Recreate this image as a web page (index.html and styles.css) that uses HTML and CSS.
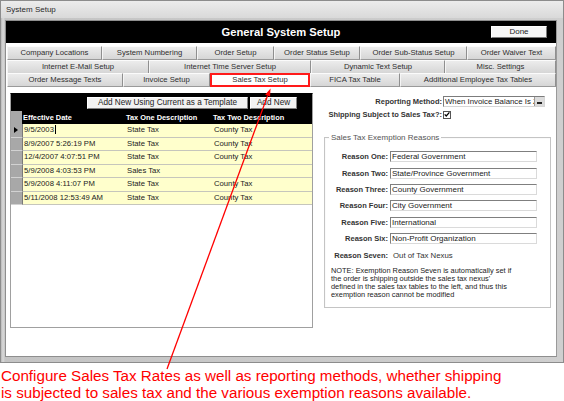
FILE: index.html
```html
<!DOCTYPE html>
<html>
<head>
<meta charset="utf-8">
<title>System Setup</title>
<link rel="stylesheet" href="styles.css">
</head>
<body>
<div class="window">
  <div class="titlebar">System Setup</div>
  <div class="client">
    <div class="header">
      <div class="header-title">General System Setup</div>
      <div class="header-actions"><button class="done">Done</button></div>
    </div>
    <div class="tabs">
      <div class="tabrow r1">
        <div class="tab">Company Locations</div>
        <div class="tab">System Numbering</div>
        <div class="tab">Order Setup</div>
        <div class="tab">Order Status Setup</div>
        <div class="tab">Order Sub-Status Setup</div>
        <div class="tab">Order Waiver Text</div>
      </div>
      <div class="tabrow r2">
        <div class="tab">Internet E-Mail Setup</div>
        <div class="tab">Internet Time Server Setup</div>
        <div class="tab">Dynamic Text Setup</div>
        <div class="tab">Misc. Settings</div>
      </div>
      <div class="tabrow r3">
        <div class="tab">Order Message Texts</div>
        <div class="tab">Invoice Setup</div>
        <div class="tab active">Sales Tax Setup</div>
        <div class="tab">FICA Tax Table</div>
        <div class="tab">Additional Employee Tax Tables</div>
      </div>
    </div>
    <div class="page">
      <div class="grid">
        <div class="grid-head">
          <div class="grid-buttons">
            <button class="btn btn-template">Add New Using Current as a Template</button>
            <button class="btn btn-new">Add New</button>
          </div>
          <div class="row head-row">
            <div class="sel sel-head"></div>
            <div class="cell">Effective Date</div>
            <div class="cell">Tax One Description</div>
            <div class="cell">Tax Two Description</div>
          </div>
        </div>
        <div class="row data-row">
          <div class="sel"><span class="current"></span></div>
          <div class="cell">9/5/2003<span class="caret"></span></div>
          <div class="cell">State Tax</div>
          <div class="cell">County Tax</div>
        </div>
        <div class="row data-row">
          <div class="sel"></div>
          <div class="cell">8/9/2007 5:26:19 PM</div>
          <div class="cell">State Tax</div>
          <div class="cell">County Tax</div>
        </div>
        <div class="row data-row">
          <div class="sel"></div>
          <div class="cell">12/4/2007 4:07:51 PM</div>
          <div class="cell">State Tax</div>
          <div class="cell">County Tax</div>
        </div>
        <div class="row data-row">
          <div class="sel"></div>
          <div class="cell">5/9/2008 4:03:53 PM</div>
          <div class="cell">Sales Tax</div>
          <div class="cell"></div>
        </div>
        <div class="row data-row">
          <div class="sel"></div>
          <div class="cell">5/9/2008 4:11:07 PM</div>
          <div class="cell">State Tax</div>
          <div class="cell">County Tax</div>
        </div>
        <div class="row data-row">
          <div class="sel"></div>
          <div class="cell">5/11/2008 12:53:49 AM</div>
          <div class="cell">State Tax</div>
          <div class="cell">County Tax</div>
        </div>
      </div>
      <div class="side">
        <div class="field-row">
          <label class="field-label">Reporting Method:</label>
          <div class="select"><span class="select-text">When Invoice Balance Is Zero</span><span class="select-btn"><span class="select-arrow"></span></span></div>
        </div>
        <div class="field-row">
          <label class="field-label">Shipping Subject to Sales Tax?:</label>
          <span class="checkbox"><svg width="7" height="7" viewBox="0 0 7 7"><path d="M0.8 3.4 L2.6 5.3 L6.3 1.0" fill="none" stroke="#000" stroke-width="1.5"/></svg></span>
        </div>
        <fieldset class="reasons">
          <legend>Sales Tax Exemption Reasons</legend>
          <div class="reason"><span class="reason-label">Reason One:</span><span class="input">Federal Government</span></div>
          <div class="reason"><span class="reason-label">Reason Two:</span><span class="input">State/Province Government</span></div>
          <div class="reason"><span class="reason-label">Reason Three:</span><span class="input">County Government</span></div>
          <div class="reason"><span class="reason-label">Reason Four:</span><span class="input">City Government</span></div>
          <div class="reason"><span class="reason-label">Reason Five:</span><span class="input">International</span></div>
          <div class="reason"><span class="reason-label">Reason Six:</span><span class="input">Non-Profit Organization</span></div>
          <div class="reason"><span class="reason-label">Reason Seven:</span><span class="reason-value">Out of Tax Nexus</span></div>
          <p class="note">NOTE: Exemption Reason Seven is automatically set if<br>the order is shipping outside the sales tax nexus'<br>defined in the sales tax tables to the left, and thus this<br>exemption reason cannot be modified</p>
        </fieldset>
      </div>
    </div>
  </div>
</div>
<p class="caption">Configure Sales Tax Rates as well as reporting methods, whether shipping<br>is subjected to sales tax and the various exemption reasons available.</p>
<svg class="arrow" width="564" height="401" viewBox="0 0 564 401">
  <line x1="167" y1="369" x2="267.6" y2="95.6" stroke="#ff0000" stroke-width="1.3"/>
  <polygon points="270.5,88.5 270.1,96.6 265.2,94.8" fill="#ff0000"/>
</svg>
</body>
</html>
```
FILE: styles.css
```css
* { box-sizing: border-box; }
html, body { margin: 0; padding: 0; background: #ffffff; }
body {
  position: relative;
  width: 564px;
  height: 401px;
  overflow: hidden;
  font-family: "Liberation Sans", Arial, sans-serif;
  color: #222;
}
.window {
  width: 564px;
  height: 363px;
  background: linear-gradient(to right, #b9b9b9 0, #dadada 2px, #c4c4c4 4px, #cfcfcf 100%);
  border: 1px solid #8c8c8c;
  padding: 0 6px 5px 4px;
  display: flex;
  flex-direction: column;
}
.titlebar {
  height: 17px;
  margin: 0 -6px 0 -4px;
  padding-left: 5px;
  font-size: 8px;
  line-height: 18px;
  color: #2a2a2a;
  background: linear-gradient(#ececec, #d9d9d9);
}
.client {
  margin-top: 2px;
  flex: 1;
  background: #ffffff;
  border: 1px solid #8e8e8e;
  border-right-color: #9a9a9a;
  display: flex;
  flex-direction: column;
}
.header {
  height: 22px;
  background: #000;
  display: grid;
  grid-template-columns: 1fr auto 1fr;
  align-items: center;
}
.header-title {
  grid-column: 2;
  color: #fff;
  font-weight: bold;
  font-size: 11.2px;
}
.header-actions {
  grid-column: 3;
  display: flex;
  justify-content: flex-end;
  padding-right: 9px;
}
.done {
  width: 56px;
  height: 12px;
  padding: 0;
  font-family: inherit;
  font-size: 8px;
  line-height: 10px;
  color: #222;
  background: #f6f6f6;
  border: 1px solid;
  border-color: #ffffff #7a7a7a #7a7a7a #ffffff;
}
.tabs {
  margin-top: 3px;
  padding-left: 1px;
}
.tabrow {
  display: grid;
  height: 13.5px;
}
.r1 { grid-template-columns: 95px 95px 77px 86px 107px 89px; }
.r2 { grid-template-columns: 142px 162px 134px 111px; }
.r3 { grid-template-columns: 116px 87px 100px 90px 156px; }
.tab {
  font-size: 7.7px;
  line-height: 12px;
  text-align: center;
  white-space: nowrap;
  color: #2e2e2e;
  background: linear-gradient(#ececec, #d6d6d6);
  border: 1px solid;
  border-color: #fbfbfb #8f8f8f #9a9a9a #f5f5f5;
}
.tab.active {
  background: #ffffff;
  border: 2px solid #ff1a1a;
  line-height: 10px;
}
.page {
  flex: 1;
  display: flex;
  align-items: flex-start;
  padding: 6.5px 0 0 4px;
}
.grid {
  width: 303px;
  height: 235px;
  border: 1px solid #a0a0a0;
  border-top-color: #000;
  background: #fff;
}
.grid-head {
  background: #000;
  padding-top: 3px;
}
.grid-buttons {
  display: flex;
  gap: 2px;
  padding-left: 76px;
  height: 12px;
}
.btn {
  height: 12px;
  padding: 0;
  font-family: inherit;
  font-size: 8.2px;
  line-height: 10px;
  color: #222;
  background: #f2f2f2;
  border: 1px solid;
  border-color: #ffffff #808080 #808080 #ffffff;
}
.btn-template { width: 161px; }
.btn-new { width: 47px; }
.row {
  display: grid;
  grid-template-columns: 11px 103px 87px 1fr;
}
.head-row {
  margin-top: 2px;
  height: 13px;
  color: #fff;
  font-weight: bold;
  font-size: 7.4px;
  line-height: 14px;
}
.head-row .cell { padding-left: 1px; }
.sel-head { background: #000; }
.data-row {
  height: 13.5px;
  font-size: 7.7px;
  line-height: 12.5px;
  color: #222;
}
.data-row .cell {
  background: #ffffcc;
  border-bottom: 1px solid #c6c6bc;
  padding-left: 2px;
  white-space: nowrap;
}
.data-row .cell:nth-child(2) { border-left: 1px solid #7a7a7a; padding-left: 1px; }
.sel {
  background: #a8a8a8;
  border-bottom: 1px solid #d2d2d2;
  position: relative;
}
.current {
  position: absolute;
  left: 3px;
  top: 3px;
  width: 0;
  height: 0;
  border-top: 3.5px solid transparent;
  border-bottom: 3.5px solid transparent;
  border-left: 4px solid #000;
}
.caret {
  display: inline-block;
  width: 1px;
  height: 9px;
  margin-left: 1px;
  vertical-align: -2px;
  background: #000;
}
.side {
  width: 243px;
  padding-top: 2.5px;
}
.field-row {
  display: flex;
  align-items: center;
  height: 12px;
  margin-bottom: 1px;
}
.field-label {
  width: 130px;
  padding-right: 1px;
  text-align: right;
  font-size: 7.5px;
  font-weight: bold;
  color: #333;
  white-space: nowrap;
}
.select {
  width: 102px;
  height: 11px;
  display: flex;
  border: 1px solid;
  border-color: #7c7c7c #d6d6d6 #d6d6d6 #7c7c7c;
  background: #fff;
  overflow: hidden;
}
.select-text {
  flex: 1;
  overflow: hidden;
  white-space: nowrap;
  font-size: 7.8px;
  line-height: 9px;
  padding-left: 1px;
  color: #222;
}
.select-btn {
  width: 10px;
  background: #dcdcdc;
  border-left: 1px solid #9a9a9a;
  display: flex;
  align-items: flex-end;
  justify-content: center;
  padding-bottom: 2px;
}
.select-arrow {
  width: 5px;
  height: 2px;
  background: #222;
}
.checkbox {
  width: 8px;
  height: 8px;
  border: 1px solid #555;
  background: #fff;
  display: flex;
  align-items: center;
  justify-content: center;
}
.checkbox svg { display: block; }
.reasons {
  margin: 12px 0 0 11px;
  width: 227px;
  padding: 6px 0 8px 0;
  border: 1px solid #c4c4c4;
  box-shadow: inset 1px 1px 0 #fafafa;
}
.reasons legend {
  margin-left: 4px;
  padding: 0 2px;
  font-size: 8px;
  line-height: 10px;
  color: #555;
}
.reason {
  display: grid;
  grid-template-columns: 63px 147px;
  column-gap: 2px;
  align-items: center;
  height: 16.4px;
}
.reason-label {
  text-align: right;
  font-size: 7.5px;
  font-weight: bold;
  color: #333;
  white-space: nowrap;
}
.input {
  height: 11px;
  border: 1px solid;
  border-color: #7f7f7f #dadada #dadada #7f7f7f;
  background: #fff;
  font-size: 8px;
  line-height: 9px;
  padding-left: 1px;
  color: #222;
  white-space: nowrap;
  overflow: hidden;
}
.reason-value {
  padding-left: 3px;
  font-size: 7.8px;
  color: #333;
  white-space: nowrap;
}
.note {
  margin: 4px 0 0 6px;
  font-size: 7.4px;
  line-height: 8px;
  color: #222;
  white-space: nowrap;
}
.caption {
  margin: 3.5px 0 0 1px;
  font-size: 15.2px;
  line-height: 17px;
  color: #ff0000;
  white-space: nowrap;
}
.arrow {
  position: absolute;
  left: 0;
  top: 0;
  pointer-events: none;
}
```
